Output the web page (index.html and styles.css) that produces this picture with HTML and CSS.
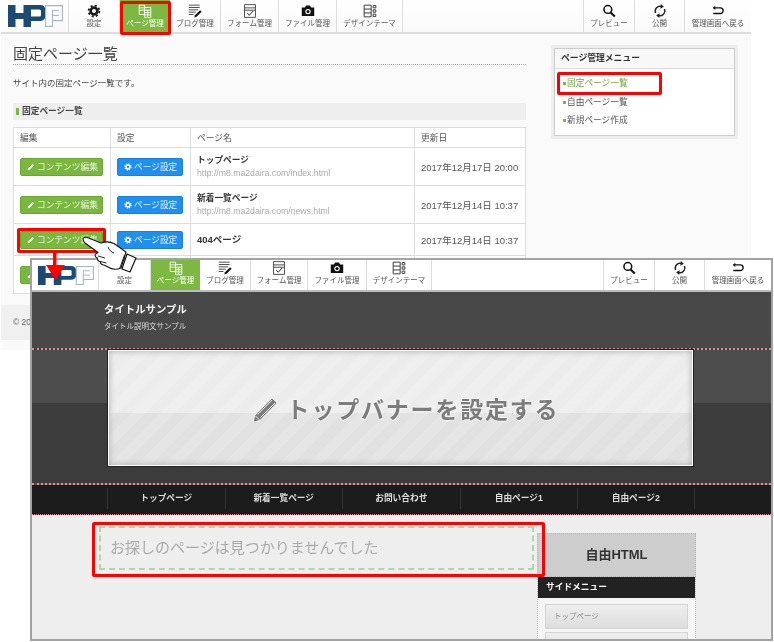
FILE: index.html
```html
<!DOCTYPE html>
<html lang="ja">
<head>
<meta charset="utf-8">
<title>固定ページ一覧</title>
<link rel="stylesheet" href="styles.css">
</head>
<body>
<svg class="defs" width="0" height="0" aria-hidden="true">
  <symbol id="i-logo" viewBox="0 0 55 22" preserveAspectRatio="none">
    <path fill="#1c4a72" fill-rule="evenodd" d="M0 0h7.500v8h8V0h17a5 5 0 0 1 5 5v6a5 5 0 0 1-5 5H23v6h-7.500v-8h-8v8H0zM23 4.500v7h8.500a1.500 1.500 0 0 0 1.500-1.500V6a1.500 1.500 0 0 0-1.500-1.500z"/>
    <path fill="#fff" stroke="#a3b7ca" stroke-width="1.100" d="M37.600.6h16.800v15H44.500v5.800h-6.900z"/>
    <path fill="none" stroke="#a3b7ca" stroke-width="1.100" d="M44.500 15.600V5.500h6.500"/>
    <path fill="none" stroke="#a3b7ca" stroke-width="1.100" d="M44.500 10.500h6.500"/>
  </symbol>
  <symbol id="i-gear" viewBox="0 0 18 18">
    <circle cx="9" cy="9" r="4.300" fill="none" stroke="#1c1c1c" stroke-width="3.400"/>
    <circle cx="9" cy="9" r="6.900" fill="none" stroke="#1c1c1c" stroke-width="2.400" stroke-dasharray="2.700 2.720"/>
  </symbol>
  <symbol id="i-page" viewBox="0 0 18 18">
    <path fill="none" stroke="#fff" stroke-width="1.100" d="M1.500 1.500h7v12h-7zM1.500 5h7M1.500 8h7M8.500 4.500h8v13h-8zM8.500 8h8M8.500 11h8M8.500 14h8M12.500 8v9.500"/>
  </symbol>
  <symbol id="i-blog" viewBox="0 0 18 18">
    <path fill="none" stroke="#444" stroke-width="1.200" d="M1 1.500h14M1 4.500h14M1 7.500h12M1 10.500h9M1 13.500h6"/>
    <path fill="#111" d="M15.500 8l2 2-6.500 6.500-3 1 1-3z"/>
  </symbol>
  <symbol id="i-form" viewBox="0 0 18 18">
    <path fill="#fff" stroke="#444" stroke-width="1.200" d="M2 .8h14v16.400H2zM2 5h14M2 8h14"/>
    <path fill="none" stroke="#222" stroke-width="1.200" d="M5.500 11.500l2.500 3 5-5.500"/>
  </symbol>
  <symbol id="i-camera" viewBox="0 0 18 18">
    <path fill="#111" d="M1 4.500h4l1.500-2.500h5L13 4.500h4v11H1z"/>
    <circle cx="9" cy="9.800" r="3.500" fill="#fff"/>
    <circle cx="9" cy="9.800" r="2" fill="#111"/>
  </symbol>
  <symbol id="i-design" viewBox="0 0 18 18">
    <path fill="none" stroke="#333" stroke-width="1.200" d="M1.500 1.500h9v15h-9zM1.500 6.500h9M1.500 11.500h9M13 2h3.500v3H13zM13 7.500h3.500v3H13zM13 13h3.500v3H13z"/>
  </symbol>
  <symbol id="i-search" viewBox="0 0 18 18">
    <circle cx="7.500" cy="7" r="5" fill="none" stroke="#111" stroke-width="2"/>
    <path stroke="#111" stroke-width="2.800" d="M11 11l5.500 5"/>
  </symbol>
  <symbol id="i-sync" viewBox="0 0 18 18">
    <path fill="none" stroke="#222" stroke-width="1.800" d="M3.300 11.500A6.300 6.300 0 0 1 11 3.200M14.700 6.500A6.300 6.300 0 0 1 7 14.800"/>
    <path fill="#222" d="M10 0l4 3.500-4.500 2.500zM8 18l-4-3.500 4.500-2.500z"/>
  </symbol>
  <symbol id="i-back" viewBox="0 0 18 18">
    <path fill="none" stroke="#111" stroke-width="1.800" d="M3 5h9a3.600 3.600 0 0 1 0 7.200H3"/>
    <path fill="#111" d="M5.500 2.200v5.600L2.500 5z"/>
  </symbol>
  <symbol id="i-pencil" viewBox="0 0 12 12">
    <path fill="#fff" d="M8.500 1.500l2 2-6.500 6.500-3 1 1-3z"/>
  </symbol>
  <symbol id="i-cog" viewBox="0 0 18 18">
    <circle cx="9" cy="9" r="4.300" fill="none" stroke="#fff" stroke-width="3.400"/>
    <circle cx="9" cy="9" r="6.900" fill="none" stroke="#fff" stroke-width="2.400" stroke-dasharray="2.700 2.720"/>
  </symbol>
</svg>

<div class="canvas">
  <section class="window window--back">
    <header class="toolbar toolbar--back">
      <div class="tool tool--logo"><svg class="logo"><use href="#i-logo"/></svg></div>
      <div class="tool"><svg class="tool-icon"><use href="#i-gear"/></svg><span>設定</span></div>
      <div class="tool tool--active"><svg class="tool-icon"><use href="#i-page"/></svg><span>ページ管理</span></div>
      <div class="tool"><svg class="tool-icon"><use href="#i-blog"/></svg><span>ブログ管理</span></div>
      <div class="tool"><svg class="tool-icon"><use href="#i-form"/></svg><span>フォーム管理</span></div>
      <div class="tool"><svg class="tool-icon"><use href="#i-camera"/></svg><span>ファイル管理</span></div>
      <div class="tool"><svg class="tool-icon"><use href="#i-design"/></svg><span>デザインテーマ</span></div>
      <div class="tool tool--spacer"></div>
      <div class="tool"><svg class="tool-icon"><use href="#i-search"/></svg><span>プレビュー</span></div>
      <div class="tool"><svg class="tool-icon"><use href="#i-sync"/></svg><span>公開</span></div>
      <div class="tool tool--last"><svg class="tool-icon"><use href="#i-back"/></svg><span>管理画面へ戻る</span></div>
    </header>
    <div class="admin">
      <main class="admin-main">
        <h1 class="page-title">固定ページ一覧</h1>
        <p class="lead">サイト内の固定ページ一覧です。</p>
        <h2 class="section-title">固定ページ一覧</h2>
        <table class="pages">
          <thead>
            <tr><th class="col-edit">編集</th><th class="col-set">設定</th><th class="col-name">ページ名</th><th>更新日</th></tr>
          </thead>
          <tbody>
            <tr class="row-tall">
              <td><span class="btn btn--green"><svg class="btn-icon"><use href="#i-pencil"/></svg>コンテンツ編集</span></td>
              <td><span class="btn btn--blue"><svg class="btn-icon"><use href="#i-cog"/></svg>ページ設定</span></td>
              <td><strong class="page-name">トップページ</strong><span class="page-url">http://m8.ma2daira.com/index.html</span></td>
              <td class="date">2017年12月17日 20:00</td>
            </tr>
            <tr class="row-tall">
              <td><span class="btn btn--green"><svg class="btn-icon"><use href="#i-pencil"/></svg>コンテンツ編集</span></td>
              <td><span class="btn btn--blue"><svg class="btn-icon"><use href="#i-cog"/></svg>ページ設定</span></td>
              <td><strong class="page-name">新着一覧ページ</strong><span class="page-url">http://m8.ma2daira.com/news.html</span></td>
              <td class="date">2017年12月14日 10:37</td>
            </tr>
            <tr class="row-short">
              <td><span class="btn btn--green"><svg class="btn-icon"><use href="#i-pencil"/></svg>コンテンツ編集</span></td>
              <td><span class="btn btn--blue"><svg class="btn-icon"><use href="#i-cog"/></svg>ページ設定</span></td>
              <td><strong class="page-name page-name--solo">404ページ</strong></td>
              <td class="date">2017年12月14日 10:37</td>
            </tr>
            <tr class="row-tall">
              <td><span class="btn btn--green"><svg class="btn-icon"><use href="#i-pencil"/></svg>コンテンツ編集</span></td>
              <td></td><td></td><td></td>
            </tr>
          </tbody>
        </table>
      </main>
      <aside class="side-panel">
        <div class="side-panel-inner">
          <h3 class="side-panel-title">ページ管理メニュー</h3>
          <ul class="side-links">
            <li class="side-link side-link--current">固定ページ一覧</li>
            <li class="side-link">自由ページ一覧</li>
            <li class="side-link">新規ページ作成</li>
          </ul>
        </div>
      </aside>
    </div>
    <footer class="admin-footer">© 2017 HPF</footer>
  </section>

  <section class="window window--front">
    <header class="toolbar toolbar--front">
      <div class="tool tool--logo"><svg class="logo logo--front"><use href="#i-logo"/></svg></div>
      <div class="tool"><svg class="tool-icon tool-icon--covered"><use href="#i-gear"/></svg><span>設定</span></div>
      <div class="tool tool--active"><svg class="tool-icon"><use href="#i-page"/></svg><span>ページ管理</span></div>
      <div class="tool"><svg class="tool-icon"><use href="#i-blog"/></svg><span>ブログ管理</span></div>
      <div class="tool"><svg class="tool-icon"><use href="#i-form"/></svg><span>フォーム管理</span></div>
      <div class="tool"><svg class="tool-icon"><use href="#i-camera"/></svg><span>ファイル管理</span></div>
      <div class="tool"><svg class="tool-icon"><use href="#i-design"/></svg><span>デザインテーマ</span></div>
      <div class="tool tool--spacer"></div>
      <div class="tool"><svg class="tool-icon"><use href="#i-search"/></svg><span>プレビュー</span></div>
      <div class="tool"><svg class="tool-icon"><use href="#i-sync"/></svg><span>公開</span></div>
      <div class="tool tool--last"><svg class="tool-icon"><use href="#i-back"/></svg><span>管理画面へ戻る</span></div>
    </header>
    <div class="site-head">
      <div class="site-name">タイトルサンプル</div>
      <div class="site-desc">タイトル説明文サンプル</div>
    </div>
    <div class="visual">
      <div class="banner">
        <div class="banner-label">
          <svg class="banner-pencil" viewBox="0 0 26 26"><path fill="#7c7c7c" stroke="#f4f4f4" stroke-width="1" d="M20 .8l5.200 5.200L8 23.500l-7 1.700 1.700-7z"/><path fill="none" stroke="#eee" stroke-width="1" d="M5.500 17.500L20 3M8.500 20.500L23 6M3 18.500l4.500 4.500"/></svg>
          <span>トップバナーを設定する</span>
        </div>
      </div>
    </div>
    <nav class="global-nav">
      <span class="global-item">トップページ</span>
      <span class="global-item">新着一覧ページ</span>
      <span class="global-item">お問い合わせ</span>
      <span class="global-item">自由ページ1</span>
      <span class="global-item global-item--last">自由ページ2</span>
    </nav>
    <div class="site-body">
      <div class="not-found">お探しのページは見つかりませんでした</div>
      <aside class="site-side">
        <div class="free-html">自由HTML</div>
        <div class="menu-title">サイドメニュー</div>
        <div class="menu-list">
          <div class="menu-item">トップページ</div>
          <div class="menu-item"></div>
        </div>
      </aside>
    </div>
  </section>

  <div class="mark mark--nav"></div>
  <div class="mark mark--link"></div>
  <div class="mark mark--button"></div>
  <div class="mark mark--missing"></div>

  <svg class="pointer" viewBox="44 232 96 50" aria-hidden="true">
    <path fill="#f00" d="M53 250h3.500v15H65l-9.500 15L46 265h7z"/>
    <path fill="#fff" stroke="#111" stroke-width="1.100" stroke-linejoin="round" d="M83 238.500C84 237 86 237 88 237.700L101 243C105 241.500 110 241.500 114 243.500L126 252L121 268C116 270 111 269 108 267L104 265C102 265 100 263.500 100.500 261.500C98.500 261.500 97 259.500 97.500 258C95.500 257.500 94.500 255.500 95.500 254L98 252.500L85 243C83.500 241.500 83 240 83 238.500Z"/>
    <path fill="#fff" stroke="#111" stroke-width="1.200" stroke-linejoin="round" d="M127 254l9 4-6 14-8-3z"/>
    <path fill="none" stroke="#111" stroke-width=".9" d="M124.500 255l-5 14M98 256l7 2M100.500 261.500l6 1.500M108 247c1 3 3 5 6 6"/>
  </svg>
</div>
</body>
</html>
```
FILE: styles.css
```css
* { box-sizing: border-box; }
html, body { margin: 0; padding: 0; background: #fff; }
body { font-family: "Liberation Sans", "Noto Sans CJK JP", sans-serif; color: #333; }
h1, h2, h3, p, ul { margin: 0; padding: 0; }
ul { list-style: none; }
.defs { position: absolute; }

.canvas { position: relative; width: 774px; height: 642px; overflow: hidden; background: #fff; filter: blur(.3px); }
.window { position: absolute; overflow: hidden; }
.window--back { left: 1px; top: 0; width: 750px; height: 350px; background: #fafafa; }
.window--front { left: 30px; top: 258px; width: 743px; height: 383px; border: 2px solid #a3a3a3; background: #eee; }

/* toolbar */
.toolbar { display: grid; background: linear-gradient(#fff, #fafafa); border-bottom: 2px solid #ddd; }
.toolbar--back { height: 34px; grid-template-columns: 68px 51px 50px 51px 58px 58px 66px 1fr 51px 50px 66px; }
.toolbar--front { height: 32px; grid-template-columns: 67px 52px 49px 51px 57px 59px 65px 1fr 51px 50px 66px; background: #fff; border-bottom-color: #bbb; }
.tool { display: flex; flex-direction: column; align-items: center; justify-content: flex-start; padding-top: 4px; border-right: 1px solid #ddd; font-size: 7.500px; line-height: 10px; color: #555; white-space: nowrap; }
.toolbar--front .tool { padding-top: 1px; }
.toolbar .tool--logo { justify-content: center; padding-top: 0; align-items: flex-start; padding-left: 7px; }
.tool--last { border-right: 0; }
.tool--active { background: #7cb842; color: #fff; border-right: 0; }
.tool-icon { width: 14px; height: 14px; margin-bottom: 1px; }
.tool-icon--covered { visibility: hidden; }
.logo { width: 55px; height: 22px; }
.logo--front { width: 56px; height: 19px; margin-left: -1px; }

/* admin */
.admin { display: flex; align-items: flex-start; padding: 10px 0 0 12px; height: 271px; }
.admin-main { width: 513px; }
.page-title { font-size: 15px; line-height: 20px; font-weight: 400; color: #444; border-bottom: 1px dotted #aaa; }
.lead { font-size: 8.500px; line-height: 12px; color: #444; margin-top: 12px; }
.section-title { position: relative; background: #eee; height: 17px; line-height: 17px; margin-top: 14px; padding-left: 9px; font-size: 8.700px; font-weight: 700; color: #444; }
.section-title::before { content: ""; position: absolute; left: 3px; top: 5px; width: 2.500px; height: 7px; background: #7cb842; }
.pages { width: 513px; margin-top: 7px; table-layout: fixed; border-collapse: collapse; background: #fff; font-size: 8.700px; color: #555; }
.pages th, .pages td { border: 1px solid #ddd; padding: 0 0 0 6px; text-align: left; font-weight: 400; }
.pages thead tr { height: 20px; }
.col-edit { width: 97px; }
.col-set { width: 80px; }
.col-name { width: 224px; }
.row-tall { height: 38px; }
.row-short { height: 32px; }
.pages .date { font-size: 9.500px; color: #555; white-space: nowrap; }
.btn { display: flex; align-items: center; height: 18px; border-radius: 2px; font-size: 8.700px; color: #e8f2dc; }
.btn--green { width: 83px; padding-left: 6px; background: #7ab73f; border: 1px solid #6da535; }
.btn--blue { width: 66px; padding-left: 6px; background: #1f8ff0; border: 1px solid #1b80d8; color: #e2f0fc; }
.btn-icon { width: 8px; height: 8px; margin-right: 2px; flex: none; }
.page-name { display: block; font-size: 8.700px; line-height: 12px; font-weight: 700; color: #333; }
.page-name--solo { font-size: 9.500px; }
.page-url { display: block; font-size: 8.700px; line-height: 11px; margin-top: 2px; color: #aaa; }

.side-panel { width: 187px; margin: 1px 0 0 25px; padding: 3px; background: #eee; }
.side-panel-inner { height: 88px; background: #fff; border: 1px solid #ccc; }
.side-panel-title { height: 20px; line-height: 19px; padding-left: 6px; font-size: 8.800px; font-weight: 700; color: #333; background: #f8f8f8; border-bottom: 1px solid #ddd; }
.side-links { padding-top: 5px; }
.side-link { position: relative; height: 18.500px; line-height: 18.500px; padding-left: 12px; font-size: 8.700px; color: #555; }
.side-link::before { content: ""; position: absolute; left: 8px; top: 8px; width: 2.500px; height: 3px; background: #7cb842; }
.side-link--current { color: #6fa83b; }
.admin-footer { height: 35px; line-height: 35px; padding-left: 12px; background: #f0f0f0; font-size: 8.500px; color: #666; }

/* front page */
.site-head { height: 56px; padding: 11px 0 0 72px; background-color: #464646; background-image: repeating-conic-gradient(rgba(255,255,255,.018) 0 25%, transparent 0 50%); background-size: 2px 2px; }
.site-name { font-size: 10.400px; line-height: 14px; font-weight: 700; color: #f4f4f4; }
.site-desc { font-size: 7.500px; line-height: 11px; margin-top: 4px; color: #ddd; }
.visual { height: 137px; padding: 0 0 0 75px; border-top: 2px dotted #e68a96; border-bottom: 2px dotted #e68a96; background: linear-gradient(#4d4d4d 0 53px, #3c3c3c 53px); }
.banner { display: flex; align-items: flex-start; justify-content: center; width: 587px; height: 118px; margin-top: -1px; border: 2px solid #fff; outline: 1px solid #222; outline-offset: -1px; background-image: repeating-linear-gradient(135deg, rgba(255,255,255,.14) 0 10px, transparent 10px 20px), linear-gradient(#ececec 0 62px, #e1e1e1 62px); box-shadow: inset 0 0 6px #aaa; }
.banner-label { display: flex; align-items: center; margin: 46px 0 0 10px; font-size: 23px; line-height: 26px; font-weight: 700; letter-spacing: 1.800px; color: #7c7c7c; text-shadow: 1px 0 0 #f4f4f4, -1px 0 0 #f4f4f4, 0 1px 0 #f4f4f4, 0 -1px 0 #f4f4f4; white-space: nowrap; }
.banner-pencil { width: 26px; height: 26px; margin-right: 9px; }
.global-nav { display: flex; height: 30px; padding: 3px 0 0 75px; background: #1c1c1c; border-bottom: 1px dotted #e68a96; }
.global-item { width: 117.500px; height: 21px; line-height: 20px; text-align: center; font-size: 8.700px; font-weight: 700; color: #ddd; border-left: 1px solid #333; }
.global-item--last { border-right: 1px solid #333; }
.site-body { display: flex; align-items: flex-start; height: 124px; padding-left: 67px; }
.not-found { width: 435px; height: 44px; margin-top: 11px; padding-left: 9px; line-height: 39px; font-size: 15px; color: #aaa; border: 2px dashed #acd9a8; }
.site-side { width: 159px; margin: 18px 0 0 3px; border: 1px dotted #f0a0a8; border-top: 0; border-bottom: 0; }
.free-html { height: 44px; line-height: 42px; margin: 0 -1px; text-align: center; font-size: 13px; font-weight: 700; color: #333; background: #cdcdcd; border: 1px dotted #f0a0a8; }
.menu-title { height: 21px; line-height: 20px; padding-left: 8px; font-size: 8.700px; font-weight: 700; color: #fff; background: #222; }
.menu-list { padding: 6px 7px 0 7px; background: #f5f5f5; }
.menu-item { height: 25px; margin-bottom: 3px; padding-left: 8px; line-height: 24px; font-size: 7.500px; color: #888; background: linear-gradient(#eee, #ddd); border: 1px solid #d4d4d4; }

/* annotations */
.mark { position: absolute; border: 3px solid #f00; border-radius: 2px; }
.mark--nav { left: 120px; top: 1px; width: 51px; height: 34px; }
.mark--link { left: 557px; top: 72px; width: 105px; height: 23px; }
.mark--button { left: 17px; top: 228px; width: 89px; height: 25px; }
.mark--missing { left: 92px; top: 522px; width: 453px; height: 55px; }
.pointer { position: absolute; left: 44px; top: 232px; width: 96px; height: 50px; }
```
